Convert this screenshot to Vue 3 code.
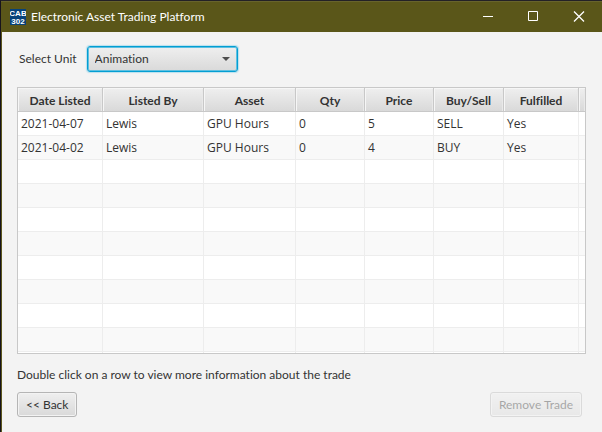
<script setup>
import { ref } from 'vue'

const units = ['Animation']
const unit = ref('Animation')

const columns = [
  { key: 'date', label: 'Date Listed' },
  { key: 'listedBy', label: 'Listed By' },
  { key: 'asset', label: 'Asset' },
  { key: 'qty', label: 'Qty' },
  { key: 'price', label: 'Price' },
  { key: 'side', label: 'Buy/Sell' },
  { key: 'fulfilled', label: 'Fulfilled' },
]

const trades = [
  { date: '2021-04-07', listedBy: 'Lewis', asset: 'GPU Hours', qty: 0, price: 5, side: 'SELL', fulfilled: 'Yes' },
  { date: '2021-04-02', listedBy: 'Lewis', asset: 'GPU Hours', qty: 0, price: 4, side: 'BUY', fulfilled: 'Yes' },
]

const emptyRows = 8
</script>

<template>
  <div class="window">
    <header class="titlebar">
      <svg class="logo" viewBox="0 0 16 16" aria-hidden="true">
        <rect width="16" height="16" fill="#07427a" />
        <text x="8" y="7" text-anchor="middle">CAB</text>
        <text x="8" y="15" text-anchor="middle">302</text>
      </svg>
      <h1>Electronic Asset Trading Platform</h1>
      <div class="controls">
        <button type="button" aria-label="Minimize">
          <svg viewBox="0 0 10 10"><path d="M1 4.5H11" /></svg>
        </button>
        <button type="button" aria-label="Maximize">
          <svg viewBox="0 0 10 10"><path d="M.5 -.5H9.5V8.5H.5Z" /></svg>
        </button>
        <button type="button" aria-label="Close">
          <svg viewBox="0 0 10 10"><path stroke-width="1.3" d="M0 -.5L10 9.5M10 -.5L0 9.5" /></svg>
        </button>
      </div>
    </header>

    <main class="content">
      <div class="unit">
        <label for="unit">Select Unit</label>
        <div class="combo">
          <select id="unit" v-model="unit">
            <option v-for="u in units" :key="u">{{ u }}</option>
          </select>
          <svg class="arrow" viewBox="0 0 8 4" aria-hidden="true"><path d="M0 0H8L4 4Z" /></svg>
        </div>
      </div>

      <table class="trades">
        <colgroup>
          <col v-for="c in columns" :key="c.key" :class="'col-' + c.key" />
          <col />
        </colgroup>
        <thead>
          <tr>
            <th v-for="c in columns" :key="c.key" scope="col">{{ c.label }}</th>
            <td></td>
          </tr>
        </thead>
        <tbody>
          <tr v-for="(t, i) in trades" :key="i">
            <td v-for="c in columns" :key="c.key">{{ t[c.key] }}</td>
            <td></td>
          </tr>
          <tr v-for="n in emptyRows" :key="'empty' + n">
            <td v-for="k in columns.length + 1" :key="k"></td>
          </tr>
          <tr class="cut">
            <td v-for="k in columns.length + 1" :key="k"></td>
          </tr>
        </tbody>
      </table>

      <p class="hint">Double click on a row to view more information about the trade</p>

      <div class="actions">
        <button type="button" class="btn">&lt;&lt; Back</button>
        <button type="button" class="btn" disabled>Remove Trade</button>
      </div>
    </main>
  </div>
</template>

<style>
body {
  margin: 0;
  background: #f3f3f3;
}
</style>

<style scoped>
.window {
  box-sizing: border-box;
  min-height: 100vh;
  border-top: 1px solid #232126;
  border-left: 1px solid #17131c;
  box-shadow: inset 1px 0 #5b561c;
  background: #f3f3f3;
  color: #333;
  font: 12px/16px Lato, "Open Sans", sans-serif;
  font-variant-ligatures: none;
}

.titlebar {
  box-sizing: border-box;
  display: flex;
  align-items: center;
  height: 31px;
  padding-left: 9px;
  border-top: 1px solid #67632c;
  background: #5a5619;
  color: #fff;
}

.logo {
  width: 16px;
  height: 16px;
  margin-right: 5px;
}

.logo text {
  fill: #fff;
  font: bold 8px "Liberation Sans", sans-serif;
}

h1 {
  flex: 1;
  margin: 0;
  font-size: 12px;
  font-weight: normal;
}

.controls {
  display: flex;
  align-self: stretch;
}

.controls button {
  display: flex;
  align-items: center;
  justify-content: center;
  width: 46px;
  padding: 0;
  border: 0;
  background: none;
}

.controls svg {
  width: 10px;
  height: 10px;
  overflow: visible;
  fill: none;
  stroke: #fff;
}

.content {
  padding: 14px 16px;
}

.unit {
  display: flex;
  align-items: center;
  gap: 10px;
  margin-bottom: 15px;
  padding-left: 2px;
}

.combo {
  display: grid;
  align-items: center;
  width: 151px;
}

.combo > * {
  grid-area: 1 / 1;
}

.combo select {
  width: 100%;
  height: 26px;
  padding: 0 7px;
  border: 1px solid #039ed3;
  border-radius: 3px;
  outline: 0;
  box-shadow: inset 0 0 0 1px #5fc0e0, 0 0 1px 1px #b8e0ee;
  appearance: none;
  background: linear-gradient(#efefef, #d9d9d9);
  color: #333;
  font: inherit;
  font-variant-ligatures: none;
}

.arrow {
  justify-self: end;
  width: 8px;
  height: 4px;
  margin-right: 8px;
  fill: #4d4d4d;
  pointer-events: none;
}

.trades {
  width: 100%;
  table-layout: fixed;
  border: 1px solid #c8c8c8;
  border-spacing: 0;
  background: #fff;
}

.col-date { width: 85px; }
.col-listedBy { width: 101px; }
.col-asset { width: 92px; }
.col-qty { width: 69px; }
.col-price { width: 69px; }
.col-side { width: 70px; }
.col-fulfilled { width: 75px; }

.trades th,
.trades td {
  box-sizing: border-box;
  height: 24px;
  padding: 0 3px;
  border-right: 1px solid #ededed;
  border-bottom: 1px solid #ededed;
  line-height: 16px;
  text-align: left;
  white-space: nowrap;
}

.trades tbody {
  font-family: "Open Sans", "Noto Sans", sans-serif;
}

.trades thead th,
.trades thead td {
  padding-top: 2px;
  border-color: #c8c8c8;
  background: linear-gradient(#efefef, #d9d9d9);
  box-shadow: inset 1px 1px #f6f6f6, inset -1px 0 #e9e9e9;
  font-weight: bold;
  text-align: center;
}

.trades tr > :last-child {
  padding: 0;
  border-right: 0;
}

.trades tbody tr:nth-child(even) {
  background: #f9f9f9;
}

.trades .cut td {
  height: 1px;
  padding: 0;
  border-bottom: 0;
}

.hint {
  margin: 13px 0 9px;
}

.actions {
  display: flex;
  justify-content: space-between;
  padding-right: 4px;
}

.btn {
  height: 25px;
  padding: 0 8px;
  border: 1px solid #b5b5b5;
  border-radius: 3px;
  background: linear-gradient(#efefef, #d9d9d9);
  box-shadow: inset 0 0 0 1px #f3f3f3;
  color: #333;
  font: inherit;
}

.btn:disabled {
  opacity: 0.4;
}
</style>
